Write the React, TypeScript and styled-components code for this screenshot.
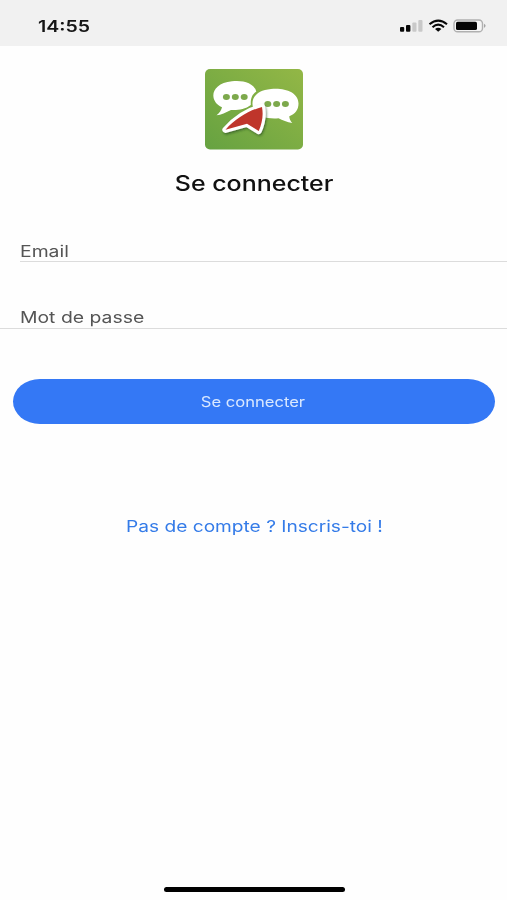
import React from "react";
import styled, { createGlobalStyle } from "styled-components";

const GlobalStyle = createGlobalStyle`
  * { box-sizing: border-box; }
  body { margin: 0; background: #fefefe; font-family: Inter, "Liberation Sans", sans-serif; }
`;

const Screen = styled.main`
  width: 100%;
  height: 900px;
  display: flex;
  flex-direction: column;
  background: #fefefe;
  overflow: hidden;
`;

const StatusBar = styled.header`
  flex: none;
  height: 46px;
  padding: 16px 20px 0 38px;
  display: flex;
  justify-content: space-between;
  background: #f1f1f1;
`;

const Wide = styled.span<{ $x: number; $origin?: string }>`
  display: inline-block;
  white-space: nowrap;
  transform: scaleX(${(p) => p.$x});
  transform-origin: ${(p) => p.$origin ?? "left"} center;
`;

const Clock = styled.time`
  font-size: 16px;
  font-weight: 600;
  line-height: 20px;
  color: #151515;
`;

const StatusIcons = styled.svg`
  width: 87px;
  height: 16px;
  margin-top: 2px;
`;

const Logo = styled.svg`
  flex: none;
  display: block;
  width: 98px;
  height: 81px;
  margin: 23px auto 0 205px;
`;

const Title = styled.h1`
  margin: 22px 0 0;
  padding-left: 1px;
  height: 24px;
  font-size: 20.8px;
  font-weight: 500;
  line-height: 24px;
  text-align: center;
  color: #111;
`;

const Form = styled.form`
  display: flex;
  flex-direction: column;
  margin-top: 45px;
`;

const Field = styled.label<{ $inset?: boolean }>`
  height: ${(p) => (p.$inset ? 21 : 22)}px;
  margin-left: ${(p) => (p.$inset ? 20 : 0)}px;
  margin-bottom: ${(p) => (p.$inset ? 45 : 50)}px;
  padding-left: ${(p) => (p.$inset ? 0 : 20)}px;
  border-bottom: 1px solid #dcdcdc;
  font-size: 16.3px;
  line-height: 20px;
  color: #555;
`;

const SubmitButton = styled.button`
  height: 45px;
  margin: 0 12px 0 13px;
  padding: 0 2px 0 0;
  border: 0;
  border-radius: 27px / 22.5px;
  background: #3478f5;
  color: #d9e8ff;
  font: 400 14.3px/44px Inter, "Liberation Sans", sans-serif;
`;

const SignUpLink = styled.a`
  margin-top: 92px;
  padding-left: 1px;
  text-align: center;
  font-size: 16px;
  line-height: 20px;
  color: #347be8;
  text-decoration: none;
`;

const HomeIndicator = styled.div`
  flex: none;
  width: 181px;
  height: 5px;
  margin: auto auto 8px 163.5px;
  border-radius: 3px;
  background: #000;
`;

const StatusGlyphs = () => (
  <StatusIcons viewBox="400 18 87 16" aria-label="Signal, Wi-Fi, batterie">
    <rect x="400" y="27" width="4.2" height="4.8" rx="1" fill="#080808" />
    <rect x="406" y="25" width="4.4" height="6.8" rx="1" fill="#080808" />
    <rect x="412.3" y="22.4" width="4.2" height="9.4" rx="1" fill="#c9c9c9" />
    <rect x="418.3" y="20" width="4.2" height="11.8" rx="1" fill="#c9c9c9" />
    <g fill="none" stroke="#080808" strokeWidth="2.1">
      <path d="M429.5 24.2Q438.2 16.9 447 24.2" />
      <path d="M432.5 27.2Q438.2 22.2 444 27.2" />
    </g>
    <path d="M435 29.1Q438.2 26.6 441.4 29.1L438.2 31.8Z" fill="#080808" />
    <rect x="454" y="20" width="28.5" height="11.8" rx="3.6" fill="#f5f5f5" stroke="#b0b0b0" strokeWidth="1.4" />
    <rect x="456" y="21.7" width="21" height="8.4" rx="1.6" fill="#050505" />
    <path d="M484.1 23.8Q487 25.8 484.1 28Z" fill="#999" />
  </StatusIcons>
);

const AppLogo = () => (
  <Logo viewBox="0 0 98 81" aria-label="Logo">
    <defs>
      <linearGradient id="green" x1="0" y1="1" x2="1" y2="0">
        <stop offset="0" stopColor="#66a241" />
        <stop offset="1" stopColor="#93b746" />
      </linearGradient>
      <filter id="shadow" x="-20%" y="-20%" width="150%" height="150%">
        <feDropShadow dx="1" dy="1.5" stdDeviation="1.1" floodColor="#24421a" floodOpacity=".6" />
      </filter>
    </defs>
    <rect width="98" height="80.5" rx="5" fill="url(#green)" />
    <path d="M27 12.3C38 11 49 14 51.3 22.5C47 25.5 45.5 29 45.8 36C40 40.5 32 41.5 26 41C21 43.5 16 46 11.5 46.3C14.5 44 16.5 41 17 38.3C3.5 32 5 14.5 27 12.3Z" fill="#fff" />
    <path d="M66 20C79 18.5 93.5 23 93.5 34.5C93.5 41 90 45 84.3 47.2C84.3 49.5 85.4 51.8 87.3 54C82 53.2 77.5 51.2 73.5 49.3C62 50.3 54 47 50.5 43.5C43.5 33 48.5 21.5 66 20Z" fill="#fff" />
    <g fill="#7da94c">
      <ellipse cx="21.4" cy="28.1" rx="3.5" ry="3" />
      <ellipse cx="30.3" cy="28.1" rx="3.5" ry="3" />
      <ellipse cx="39.2" cy="28.1" rx="3.5" ry="3" />
      <ellipse cx="62.8" cy="35" rx="3.5" ry="3" />
      <ellipse cx="71.6" cy="35" rx="3.5" ry="3" />
      <ellipse cx="80.4" cy="35" rx="3.5" ry="3" />
    </g>
    <path d="M57 38C45 41 31 49 20.5 60.8L42 54.8L53.7 62C57.3 54 58.5 46 57 38Z" fill="#fff" stroke="#fff" strokeWidth="6.2" strokeLinejoin="round" filter="url(#shadow)" />
    <path d="M57 38C45 41 31 49 20.5 60.8L42 54.8L53.7 62C57.3 54 58.5 46 57 38Z" fill="#bf352b" />
  </Logo>
);

export default function App() {
  return (
    <>
      <GlobalStyle />
      <Screen>
        <StatusBar>
          <Clock><Wide $x={1.22}>14:55</Wide></Clock>
          <StatusGlyphs />
        </StatusBar>
        <AppLogo />
        <Title><Wide $x={1.2} $origin="center">Se connecter</Wide></Title>
        <Form>
          <Field $inset><Wide $x={1.19}>Email</Wide></Field>
          <Field><Wide $x={1.19}>Mot de passe</Wide></Field>
          <SubmitButton type="button"><Wide $x={1.16} $origin="center">Se connecter</Wide></SubmitButton>
          <SignUpLink href="#"><Wide $x={1.195} $origin="center">Pas de compte ? Inscris-toi !</Wide></SignUpLink>
        </Form>
        <HomeIndicator />
      </Screen>
    </>
  );
}
